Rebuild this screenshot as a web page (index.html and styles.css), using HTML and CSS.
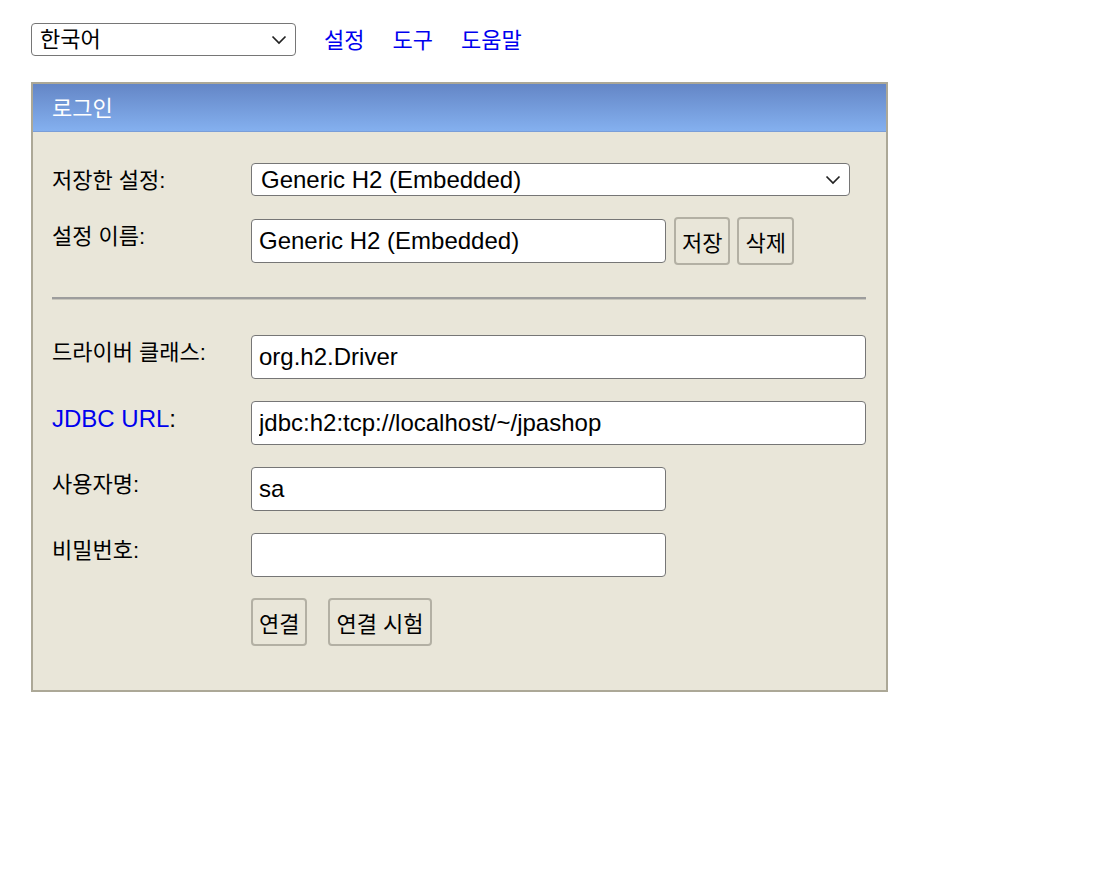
FILE: index.html
```html
<!DOCTYPE html>
<html lang="ko">
<head>
<meta charset="utf-8">
<title>H2 Console</title>
<link rel="stylesheet" href="styles.css">
</head>
<body>
<div class="page">
  <div class="topbar">
    <div class="select-wrap lang">
      <select class="sel ko"><option>한국어</option></select>
      <svg class="chev" width="16" height="10" viewBox="0 0 16 10"><path d="M1.5 1.5 L8 8 L14.5 1.5" fill="none" stroke="#222" stroke-width="1.7"/></svg>
    </div>
    <a class="toplink" href="#">설정</a>
    <a class="toplink" href="#">도구</a>
    <a class="toplink" href="#">도움말</a>
  </div>

  <div class="panel">
    <div class="panel-head">로그인</div>
    <div class="panel-body">
      <div class="row r1">
        <div class="label">저장한 설정:</div>
        <div class="select-wrap saved">
          <select class="sel"><option>Generic H2 (Embedded)</option></select>
          <svg class="chev" width="16" height="10" viewBox="0 0 16 10"><path d="M1.5 1.5 L8 8 L14.5 1.5" fill="none" stroke="#222" stroke-width="1.7"/></svg>
        </div>
      </div>
      <div class="row r2">
        <div class="label">설정 이름:</div>
        <div class="ctrl">
          <input class="inp short" type="text" value="Generic H2 (Embedded)">
          <button class="btn">저장</button>
          <button class="btn">삭제</button>
        </div>
      </div>
      <div class="sep"></div>
      <div class="row r3">
        <div class="label">드라이버 클래스:</div>
        <input class="inp long" type="text" value="org.h2.Driver">
      </div>
      <div class="row r4">
        <div class="label latin"><a class="jdbc" href="#">JDBC URL</a>:</div>
        <input class="inp long" type="text" value="jdbc:h2:tcp://localhost/~/jpashop">
      </div>
      <div class="row r5">
        <div class="label">사용자명:</div>
        <input class="inp short" type="text" value="sa">
      </div>
      <div class="row r6">
        <div class="label">비밀번호:</div>
        <input class="inp short" type="password" value="">
      </div>
      <div class="row r7">
        <div class="label"></div>
        <div class="ctrl">
          <button class="btn">연결</button>
          <button class="btn">연결 시험</button>
        </div>
      </div>
    </div>
  </div>
</div>
</body>
</html>
```

FILE: styles.css
```css
* { box-sizing: border-box; }
body {
  margin: 0;
  background: #fff;
  font-family: "Liberation Sans", Arial, "Noto Sans CJK KR", sans-serif;
  font-size: 22px;
  color: #000;
}
.page { padding: 23px 31px; }

.topbar {
  display: flex;
  align-items: center;
  height: 33px;
}
.toplink {
  color: #0000ee;
  text-decoration: none;
  font-size: 22px;
  margin-left: 28px;
  line-height: 33px;
  position: relative;
  top: 1px;
}

.select-wrap { position: relative; }
.sel {
  appearance: none;
  -webkit-appearance: none;
  display: block;
  width: 100%;
  height: 33px;
  border: 1px solid #767676;
  border-radius: 4px;
  background: #fff;
  font-family: inherit;
  font-size: 24px;
  color: #000;
  padding: 0 30px 0 8px;
  margin: 0;
}
.sel.ko { font-size: 22px; }
.chev {
  position: absolute;
  top: 12px;
  right: 9px;
  pointer-events: none;
}
.lang { width: 265px; }
.saved { width: 599px; }
.saved .sel { padding-left: 9px; }

.panel {
  margin-top: 26px;
  width: 857px;
  border: 2px solid #aca897;
  background: #e9e6d9;
}
.panel-head {
  height: 48px;
  background: linear-gradient(to bottom, #6486c6, #84b0ef);
  color: #fff;
  font-size: 22px;
  line-height: 49px;
  padding-left: 19px;
  border-bottom: 1px solid #7a9ed8;
}
.panel-body {
  padding: 31px 20px 44px 19px;
}

.row {
  display: grid;
  grid-template-columns: 199px auto;
  align-items: start;
}
.label {
  font-size: 22px;
  line-height: 26px;
  padding-top: 5px;
  white-space: nowrap;
}
.label.latin { font-size: 24px; }
.jdbc { color: #0000ee; text-decoration: none; }

.ctrl { display: flex; align-items: flex-start; }

.inp {
  display: block;
  height: 44px;
  border: 1px solid #767676;
  border-radius: 4px;
  background: #fff;
  font-family: inherit;
  font-size: 24px;
  color: #000;
  padding: 0 7px;
  margin: 0;
}
.short { width: 415px; }
.long { width: 615px; }

.btn {
  height: 48px;
  border: 2px solid #b3b0a4;
  border-radius: 4px;
  background: #e9e6d9;
  font-family: inherit;
  font-size: 22px;
  color: #000;
  padding: 0 6px;
  margin: 0;
}

.r2 { margin-top: 21px; }
.r2 .label { padding-top: 7px; }
.r2 .inp { margin-top: 2px; margin-right: 8px; }
.r2 .btn + .btn { margin-left: 7px; }

.sep {
  margin-top: 32px;
  background: #9d9d9d;
  border-bottom: 1px solid #c8c6bc;
  height: 3px;
}
.r3 { margin-top: 35px; }
.r4 { margin-top: 22px; }
.r5 { margin-top: 22px; }
.r6 { margin-top: 22px; }
.r7 { margin-top: 21px; }
.r7 .btn + .btn { margin-left: 21px; }
```
